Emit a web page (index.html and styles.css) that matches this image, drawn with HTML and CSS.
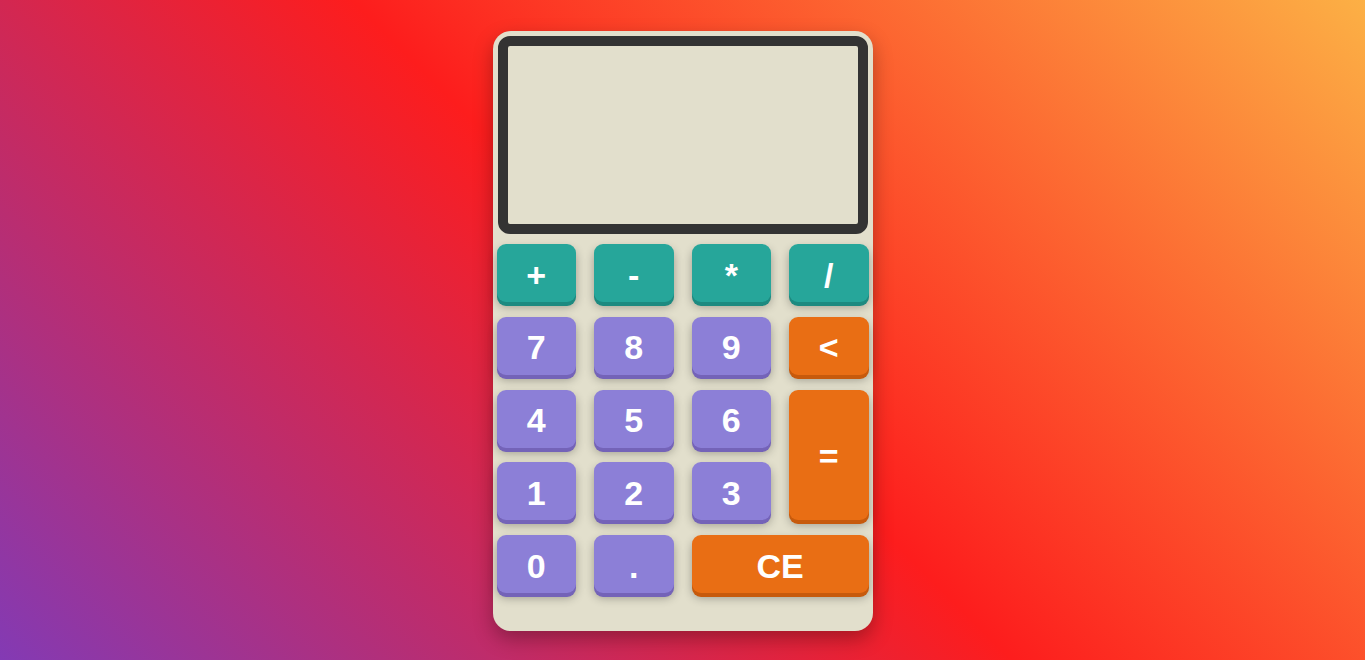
FILE: index.html
```html
<!DOCTYPE html>
<html lang="en">
<head>
<meta charset="utf-8">
<title>Calculator</title>
<link rel="stylesheet" href="styles.css">
</head>
<body>
<main class="page">
  <div class="calc">
    <div class="display"><div class="screen"></div></div>
    <div class="keys">
      <button class="key op">+</button>
      <button class="key op">-</button>
      <button class="key op">*</button>
      <button class="key op">/</button>
      <button class="key num">7</button>
      <button class="key num">8</button>
      <button class="key num">9</button>
      <button class="key act">&lt;</button>
      <button class="key num">4</button>
      <button class="key num">5</button>
      <button class="key num">6</button>
      <button class="key act tall">=</button>
      <button class="key num">1</button>
      <button class="key num">2</button>
      <button class="key num">3</button>
      <button class="key num">0</button>
      <button class="key num">.</button>
      <button class="key act wide">CE</button>
    </div>
  </div>
</main>
</body>
</html>
```
FILE: styles.css
```css
html, body {
  margin: 0;
  padding: 0;
  height: 100%;
}
body {
  background: linear-gradient(45deg, #833ab4, #fd1d1d, #fcb045);
  font-family: "Liberation Sans", Arial, sans-serif;
  overflow: hidden;
}
.page {
  height: 660px;
  display: flex;
  justify-content: center;
  align-items: flex-start;
  padding-top: 31px;
  box-sizing: border-box;
}
.calc {
  width: 380px;
  height: 600px;
  box-sizing: border-box;
  background: #e2dfcc;
  border-radius: 18px;
  padding: 5px 4px 0 4px;
  box-shadow: 0 8px 20px rgba(0, 0, 0, 0.3);
}
.display {
  margin: 0 1px;
  height: 198px;
  box-sizing: border-box;
  border: 10px solid #333333;
  border-radius: 12px;
  background: #e2dfcc;
}
.screen {
  height: 100%;
}
.keys {
  margin-top: 10px;
  display: grid;
  grid-template-columns: repeat(4, 1fr);
  grid-template-rows: repeat(5, 58px);
  column-gap: 18px;
  row-gap: 14.75px;
}
.key {
  border: none;
  border-radius: 9px;
  color: #ffffff;
  font-family: "Liberation Sans", Arial, sans-serif;
  font-weight: bold;
  font-size: 34px;
  padding: 4px 0 0 0;
  cursor: pointer;
}
.op {
  background: #26a69a;
  box-shadow: 0 4px 0 #1d8a80, 0 5px 10px rgba(0, 0, 0, 0.3);
}
.num {
  background: #8c7fd7;
  box-shadow: 0 4px 0 #7463b8, 0 5px 10px rgba(0, 0, 0, 0.3);
}
.act {
  background: #e96e14;
  box-shadow: 0 4px 0 #c75a0c, 0 5px 10px rgba(0, 0, 0, 0.3);
}
.tall {
  grid-row: span 2;
}
.wide {
  grid-column: span 2;
}
```
